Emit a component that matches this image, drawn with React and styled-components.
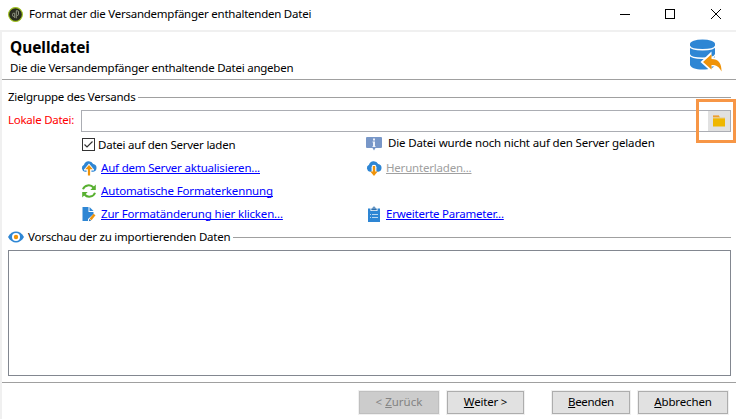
import React from "react";
import styled, { createGlobalStyle } from "styled-components";

const Global = createGlobalStyle`
  * { box-sizing: border-box; }
  body { margin: 0; background: #fff; overflow: hidden; }
  button { font: inherit; color: inherit; }
`;

const Window = styled.div`
  width: 736px;
  height: 419px;
  display: flex;
  flex-direction: column;
  background: #fff;
  color: #000;
  font: 11.5px/16px "Noto Sans", "Open Sans", sans-serif;
  white-space: nowrap;
`;

const TitleBar = styled.header`
  height: 32px;
  flex: none;
  display: flex;
  align-items: center;
  padding: 0 15px 2px 8px;
  border-bottom: 2px solid #f0f0f0;
  svg { flex: none; display: block; }
`;

const Label = styled.span`
  display: block;
  flex: none;
  letter-spacing: ${(p) => p.$ls || 0}px;
  color: ${(p) => p.$color || "inherit"};
`;

const WindowTitle = styled(Label)`
  margin-left: 6px;
  flex: 1;
`;

const Controls = styled.div`
  display: flex;
  gap: 35px;
  svg:last-child { margin: 0 -1px 0 1px; }
`;

const Body = styled.div`
  flex: 1;
  display: flex;
  flex-direction: column;
  border-left: 2px solid #f0f0f0;
`;

const PageHeader = styled.div`
  height: 48px;
  display: flex;
  justify-content: space-between;
  padding: 6px 14px 0 8px;
  border-bottom: 1px solid #a0a0a0;
  svg { margin-top: 0.5px; }
`;

const Heading = styled.h1`
  margin: 0 0 2px;
  font-size: 15.4px;
  line-height: 20px;
  font-weight: 700;
`;

const Form = styled.main`
  padding: 9px 5px 0 6px;
  height: 302px;
`;

const GroupTitle = styled.div`
  height: 16px;
  display: flex;
  align-items: center;
  &::after {
    content: "";
    flex: 1;
    height: 1px;
    margin-left: 3px;
    background: #a0a0a0;
  }
  svg { margin-right: 4px; }
`;

const FileRow = styled.div`
  display: grid;
  grid-template-columns: 73px 1fr;
  height: 22px;
  margin-top: 5px;
  align-items: center;
  ${Label} { padding-bottom: 2px; }
`;

const FileField = styled.div`
  height: 22px;
  display: flex;
  justify-content: flex-end;
  border: 1px solid #abadb3;
`;

const Browse = styled.button`
  width: 22px;
  height: 20px;
  border: 0;
  padding: 0;
  display: grid;
  place-items: center;
  background: #e1e1e1;
`;

const Highlight = styled.div`
  position: absolute;
  left: 696px;
  top: 99px;
  width: 40px;
  height: 44px;
  border: 3px solid #f79646;
`;

const Options = styled.div`
  display: grid;
  grid-template-columns: 285px 1fr;
  grid-template-rows: 22px 23px 23px 23px;
  padding: 2px 0 0 73px;
  height: 97px;
`;

const Option = styled.div`
  display: flex;
  align-items: center;
  gap: ${(p) => p.$gap || 4}px;
  padding-bottom: ${(p) => p.$lift || 0}px;
  padding-left: ${(p) => p.$indent || 0}px;
  svg { flex: none; display: block; }
`;

const Link = styled(Label)`
  color: ${(p) => (p.$disabled ? "#a0a0a0" : "#0000ff")};
  text-decoration: underline;
  text-decoration-thickness: 1px;
  text-underline-offset: 1px;
  text-decoration-skip-ink: none;
`;

const Preview = styled.div`
  height: 126px;
  margin-top: 5px;
  border: 1px solid #828790;
`;

const Footer = styled.footer`
  flex: 1;
  display: flex;
  border-top: 1px solid #a0a0a0;
  padding: 8px 8px 0 0;
  justify-content: flex-end;
`;

const PushButton = styled.button`
  width: ${(p) => p.$w}px;
  height: 23px;
  margin-left: ${(p) => p.$gap || 8}px;
  padding: 0 0 1px;
  border: 1px solid ${(p) => (p.disabled ? "#bfbfbf" : "#adadad")};
  background: ${(p) => (p.disabled ? "#cccccc" : "#e1e1e1")};
  color: ${(p) => (p.disabled ? "#838383" : "#000")};
  box-shadow: 0 0 0 1px #f0f0f0;
  letter-spacing: ${(p) => p.$ls || 0}px;
  u { text-underline-offset: 1px; text-decoration-thickness: 1px; }
`;

const AppIcon = () => (
  <svg width="15" height="15" viewBox="0 0 15 15">
    <circle cx="7.5" cy="7.5" r="6.9" fill="#292d20" stroke="#a3c520" strokeWidth="1.1" />
    <path d="M6.700 11V6.200H5.800Q4.500 6.200 4.500 7.500V8.300Q4.500 9.500 5.800 9.500M8.300 11.300V3.700H9.200Q10.500 3.700 10.500 5V7.300Q10.500 8.500 9.200 8.500" fill="none" stroke="#9ba08d" strokeWidth=".9" />
  </svg>
);

const DatabaseIcon = () => (
  <svg width="33" height="33" viewBox="0 0 33 33">
    <path d="M1 5V25.500C1 28.500 6.500 30.500 13.500 30.500S26 28.500 26 25.500V5Z" fill="#2e86d4" />
    <ellipse cx="13.500" cy="5" rx="12.500" ry="4.500" fill="#2e86d4" />
    <path d="M.5 7C2 12 25 12 26.500 7M.5 15.500C2 20.500 25 20.500 26.500 15.500" fill="none" stroke="#fff" strokeWidth="1.300" />
    <path d="M11.500 23L22.500 12.500V18C30 18 33 24 33 33C30.500 28.500 28 27.500 22.500 27.500V33Z" fill="#fff" />
    <path d="M14 23L22.500 15.300V20C29.500 20 32.800 24.500 32.500 32.500C30 27.500 27.500 26 22.500 26V30.500Z" fill="#ef9309" />
  </svg>
);

const CloudIcon = ({ down }) => (
  <svg width="16" height="16" viewBox="0 0 16 16">
    <path d="M4 11.700A3.700 3.700 0 0 1 3 4.700A5 5 0 0 1 12.200 4A3.900 3.900 0 0 1 12.300 11.700Z" fill="#2e86d4" />
    {down ? (
      <>
        <path d="M5.600 12V7.200Q5.600 4.800 8 4.800T10.400 7.200V12Z" fill="#fff" />
        <path d="M6.800 6H9.200V11.500H11.700L8 16L4.300 11.500H6.800Z" fill="#ef9309" />
      </>
    ) : (
      <>
        <path d="M3 9.500L8 3.600L13 9.500V10.500H10.400V12H5.600V10.500H3Z" fill="#fff" />
        <path d="M6.900 15.500V9.300H4.200L8 5L11.800 9.300H9.100V15.500Z" fill="#ef9309" />
      </>
    )}
  </svg>
);

const RefreshIcon = () => (
  <svg width="16" height="16" viewBox="0 0 16 16">
    <path d="M2 6.300C3.500 1.900 9.500 1 12.500 4.500M14 9.700C12.500 14.100 6.500 15 3.500 11.500" fill="none" stroke="#58b031" strokeWidth="2" />
    <path d="M14.800 1.500V7H9.300ZM1.200 14.500V9H6.700Z" fill="#58b031" />
  </svg>
);

const EditIcon = () => (
  <svg width="16" height="16" viewBox="0 0 16 16">
    <path d="M1.500 1H7.500V6H12.500V8L7 13V15H1.500Z" fill="#2e86d4" />
    <path d="M8.500 1L12.500 5H8.500Z" fill="#2e86d4" />
    <path d="M8.700 12.500L12.500 7.700L14.500 9.300L10.500 14.300Z" fill="#ef9309" />
    <path d="M7.800 15.200L8.500 12.800L10.200 14.500Z" fill="#2e6fad" />
  </svg>
);

const InfoIcon = () => (
  <svg width="16" height="15" viewBox="0 0 16 15">
    <path d="M1 1H15Q16 1 16 2V11Q16 12 15 12H9.500L8 14.500L6.500 12H1Q0 12 0 11V2Q0 1 1 1Z" fill="#7897c8" />
    <path d="M7 2.500H9V4.500H7ZM6.500 5.500H9V10H9.500V11H6.500V10H7V6.500H6.500Z" fill="#edf2fa" />
  </svg>
);

const ClipboardIcon = () => (
  <svg width="16" height="16" viewBox="0 0 16 16">
    <path d="M2 2.500H4.500V5H11.500V2.500H14V16H2Z" fill="#2e86d4" />
    <path d="M5.300 4.200V2.500H6.500Q6.500 .5 8 .5T9.500 2.500H10.700V4.200Z" fill="#2e6fad" />
    <path d="M8 1.500V2.500" stroke="#fff" />
    <path d="M4 8.500H5M6 8.500H12M4 11.500H5M6 11.500H12" stroke="#b9d8f2" />
  </svg>
);

const EyeIcon = () => (
  <svg width="16" height="12" viewBox="0 0 16 12">
    <path d="M0 6C4-1.300 12-1.300 16 6C12 13.300 4 13.300 0 6Z" fill="#2e86d4" />
    <circle cx="8" cy="6" r="4" fill="#fff" />
    <circle cx="8" cy="6" r="2.200" fill="#ef9309" />
  </svg>
);

const FolderIcon = () => (
  <svg width="12" height="12" viewBox="0 0 12 12">
    <path d="M0 1H7V2.500H12V4H0Z" fill="#e9c987" />
    <path d="M0 .5H6V1.700H0Z" fill="#ef8b09" />
    <path d="M0 3.500H12V11.500H0Z" fill="#efb700" />
  </svg>
);

const CheckBox = () => (
  <svg width="13" height="13" viewBox="0 0 13 13">
    <rect x=".5" y=".5" width="12" height="12" fill="#fff" stroke="#333" />
    <path d="M2.500 6.500L5 9L10.500 3.500" fill="none" stroke="#333" strokeWidth="1.200" />
  </svg>
);

export default function App() {
  return (
    <Window>
      <Global />
      <TitleBar>
        <AppIcon />
        <WindowTitle $ls={-0.24}>Format der die Versandempfänger enthaltenden Datei</WindowTitle>
        <Controls>
          <svg width="10" height="10"><path d="M0 5.500H10" stroke="#000" /></svg>
          <svg width="10" height="10"><rect x=".5" y=".5" width="9" height="9" fill="none" stroke="#000" /></svg>
          <svg width="11" height="10"><path d="M0 0L10 10M10 0L0 10" stroke="#000" /></svg>
        </Controls>
      </TitleBar>
      <Body>
        <PageHeader>
          <div>
            <Heading>Quelldatei</Heading>
            <Label $ls={-0.24}>Die die Versandempfänger enthaltende Datei angeben</Label>
          </div>
          <DatabaseIcon />
        </PageHeader>
        <Form>
          <GroupTitle><Label $ls={-0.25}>Zielgruppe des Versands</Label></GroupTitle>
          <FileRow>
            <Label $ls={-0.27} $color="#ff0000">Lokale Datei:</Label>
            <FileField><Browse aria-label="Datei auswählen"><FolderIcon /></Browse></FileField>
          </FileRow>
          <Options>
            <Option $gap={3} $indent={1} $lift={1}><CheckBox /><Label $ls={-0.23}>Datei auf den Server laden</Label></Option>
            <Option $gap={6} $lift={4}><InfoIcon /><Label $ls={-0.16}>Die Datei wurde noch nicht auf den Server geladen</Label></Option>
            <Option><CloudIcon /><Link $ls={-0.19}>Auf dem Server aktualisieren...</Link></Option>
            <Option><CloudIcon down /><Link $ls={-0.2} $disabled>Herunterladen...</Link></Option>
            <Option><RefreshIcon /><Link $ls={-0.14}>Automatische Formaterkennung</Link></Option>
            <span />
            <Option><EditIcon /><Link $ls={-0.165}>Zur Formatänderung hier klicken...</Link></Option>
            <Option><ClipboardIcon /><Link $ls={-0.23}>Erweiterte Parameter...</Link></Option>
          </Options>
          <GroupTitle><EyeIcon /><Label $ls={-0.22}>Vorschau der zu importierenden Daten</Label></GroupTitle>
          <Preview />
        </Form>
        <Footer>
          <PushButton $w={80} disabled>&lt; <u>Z</u>urück</PushButton>
          <PushButton $w={77} $ls={-0.2}><u>W</u>eiter &gt;</PushButton>
          <PushButton $w={78} $gap={28} $ls={-0.35}><u>B</u>eenden</PushButton>
          <PushButton $w={90} $ls={-0.15}><u>A</u>bbrechen</PushButton>
        </Footer>
      </Body>
      <Highlight />
    </Window>
  );
}
